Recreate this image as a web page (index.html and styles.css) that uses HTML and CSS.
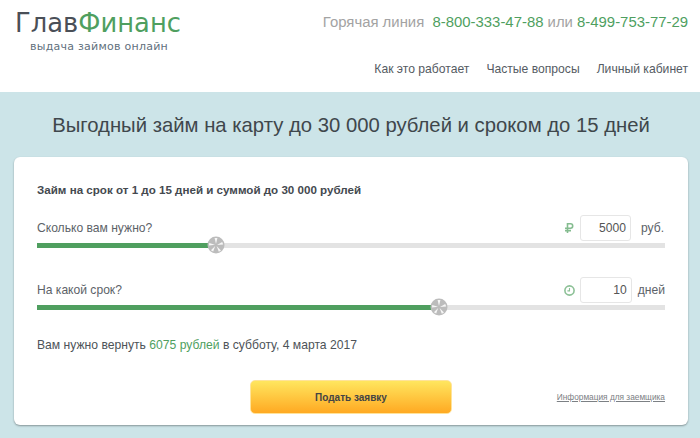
FILE: index.html
```html
<!DOCTYPE html>
<html lang="ru">

<head>
    <meta charset="UTF-8">
    <title>ГлавФинанс</title>
    <link rel="stylesheet" href="styles.css">
</head>

<body>
    <header class="header">
        <div class="logo">
            <div class="logo-name">Глав<span class="green">Финанс</span></div>
            <div class="logo-sub">выдача займов онлайн</div>
        </div>
        <div class="header-right">
            <div class="hotline">Горячая линия&nbsp; <span class="green">8-800-333-47-88</span> или <span class="green">8-499-753-77-29</span></div>
            <nav class="nav">
                <a href="#">Как это работает</a>
                <a href="#">Частые вопросы</a>
                <a href="#">Личный кабинет</a>
            </nav>
        </div>
    </header>

    <main class="main">
        <h1 class="title">Выгодный займ на карту до 30 000 рублей и сроком до 15 дней</h1>

        <section class="card">
            <h2 class="card-title">Займ на срок от 1 до 15 дней и суммой до 30 000 рублей</h2>

            <div class="field field-sum">
                <div class="field-row">
                    <span class="field-label">Сколько вам нужно?</span>
                    <div class="field-value">
                        <svg class="icon icon-rub" width="9" height="10" viewBox="0 0 9 10">
                            <path d="M2.5 0v10M0 7.6h6M0 5.2h2.5M2.5 .8h3a2.2 2.2 0 0 1 0 4.4h-3" fill="none" stroke="#84bc8f" stroke-width="1.6"/>
                        </svg>
                        <div class="num-box num-sum">5000</div>
                        <span class="unit unit-sum">руб.</span>
                    </div>
                </div>
                <div class="track">
                    <div class="fill" style="width: 179px"></div>
                    <span class="knob"><svg width="18" height="18" viewBox="0 0 18 18">
                        <circle cx="9" cy="9" r="8.5" fill="#bcbcbc"/>
                        <path d="M9 8 7.6 2h2.8zM10 9l5.2-3 1 2.4zM9.6 10l4.4 4.4-2.2 1.4zM8.2 10l-2 5.6-2.3-1.4zM8 8.8 2 9.6 2.2 7z" fill="#f6f6f6"/>
                    </svg></span>
                </div>
            </div>

            <div class="field field-term">
                <div class="field-row">
                    <span class="field-label">На какой срок?</span>
                    <div class="field-value">
                        <svg class="icon icon-clock" width="11" height="11" viewBox="0 0 11 11">
                            <circle cx="5.5" cy="5.5" r="4.6" fill="none" stroke="#8cc096" stroke-width="1.6"/>
                            <path d="M5.5 3v2.9H3.4" fill="none" stroke="#8cc096" stroke-width="1.1"/>
                        </svg>
                        <div class="num-box num-term">10</div>
                        <span class="unit unit-term">дней</span>
                    </div>
                </div>
                <div class="track">
                    <div class="fill" style="width: 402px"></div>
                    <span class="knob"><svg width="18" height="18" viewBox="0 0 18 18">
                        <circle cx="9" cy="9" r="8.5" fill="#bcbcbc"/>
                        <path d="M9 8 7.6 2h2.8zM10 9l5.2-3 1 2.4zM9.6 10l4.4 4.4-2.2 1.4zM8.2 10l-2 5.6-2.3-1.4zM8 8.8 2 9.6 2.2 7z" fill="#f6f6f6"/>
                    </svg></span>
                </div>
            </div>

            <p class="result">Вам нужно вернуть <span class="green">6075 рублей</span> в субботу, 4 марта 2017</p>

            <div class="actions">
                <button class="submit">Подать заявку</button>
                <a class="info-link" href="#">Информация для заемщика</a>
            </div>
        </section>
    </main>
</body>

</html>
```

FILE: styles.css
```css
* {
    margin: 0;
    padding: 0;
    box-sizing: border-box;
}

html, body {
    height: 100%;
}

body {
    font-family: "Liberation Sans", Arial, sans-serif;
    background-color: #cce4e8;
    overflow: hidden;
}

.green {
    color: #4f9f5f;
}

/* Header */
.header {
    height: 92px;
    background-color: #fff;
    display: flex;
    justify-content: space-between;
    padding: 0 12px 0 15px;
}

.logo-name {
    font-family: "DejaVu Sans", sans-serif;
    font-size: 25.8px;
    line-height: 32px;
    margin-top: 7px;
    color: #4a4f57;
}

.logo-sub {
    font-family: "DejaVu Sans", sans-serif;
    font-size: 11px;
    line-height: 14px;
    margin-top: 1px;
    margin-left: 15px;
    letter-spacing: 0.25px;
    color: #5f707d;
}

.header-right {
    display: flex;
    flex-direction: column;
    align-items: flex-end;
}

.hotline {
    font-size: 14.9px;
    line-height: 18px;
    margin-top: 13px;
    color: #a3a3a3;
}

.nav {
    display: flex;
    gap: 17px;
    margin-top: 31px;
}

.nav a {
    font-size: 12.15px;
    line-height: 14px;
    color: #555b63;
    text-decoration: none;
}

/* Main */
.main {
    padding: 0 12px 0 14px;
}

.title {
    font-size: 20.3px;
    font-weight: normal;
    line-height: 24px;
    text-align: center;
    color: #3f474c;
    margin-top: 21px;
}

.card {
    height: 268px;
    margin-top: 20px;
    padding: 26px 23px 0;
    background-color: #fff;
    border-radius: 6px;
    box-shadow: 0 1px 2px rgba(0, 0, 0, 0.35);
}

.card-title {
    font-size: 11.6px;
    font-weight: bold;
    line-height: 14px;
    color: #44494f;
}

.field-row {
    display: flex;
    justify-content: space-between;
    align-items: center;
    height: 26px;
}

.field-sum {
    margin-top: 18px;
}

.field-term {
    margin-top: 29px;
}

.field-label {
    font-size: 12.1px;
    color: #5c6268;
}

.field-value {
    display: flex;
    align-items: center;
}

.icon-rub {
    margin-right: 6px;
}

.icon-clock {
    margin-right: 5px;
}

.num-box {
    height: 26px;
    border: 1px solid #e6e6e6;
    border-radius: 3px;
    font-size: 12.1px;
    line-height: 24px;
    text-align: right;
    padding-right: 4px;
    color: #555;
}

.num-sum {
    width: 51px;
}

.num-term {
    width: 52px;
}

.unit {
    font-size: 12.1px;
    color: #5c6268;
}

.unit-sum {
    margin-left: 10px;
    margin-right: 1px;
}

.unit-term {
    margin-left: 6px;
}

.track {
    position: relative;
    height: 5px;
    margin-top: 2px;
    background-color: #e3e3e3;
}

.fill {
    height: 5px;
    background-color: #4f9f5f;
}

.knob {
    position: absolute;
    top: -7px;
    margin-left: -9px;
    width: 18px;
    height: 18px;
    filter: blur(0.5px);
}

.field-sum .knob {
    left: 179px;
}

.field-term .knob {
    left: 402px;
}

.result {
    font-size: 12.15px;
    line-height: 14px;
    margin-top: 28px;
    color: #4d5358;
}

.actions {
    display: flex;
    justify-content: space-between;
    align-items: center;
    margin-top: 28px;
    padding-left: 213px;
}

.submit {
    width: 202px;
    height: 34px;
    border: 1px solid #ffe39a;
    border-radius: 5px;
    background: linear-gradient(#ffe65f, #ffa922);
    font-family: "Liberation Sans", Arial, sans-serif;
    font-size: 10px;
    font-weight: bold;
    color: #444;
}

.info-link {
    font-size: 8.3px;
    color: #7c8084;
}
```
